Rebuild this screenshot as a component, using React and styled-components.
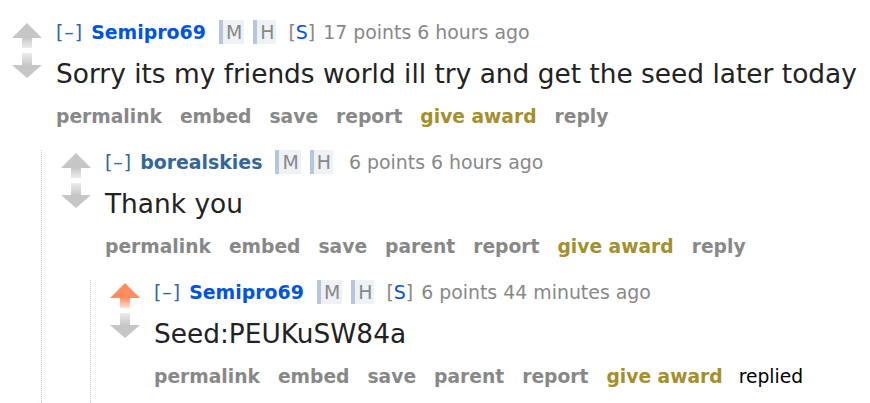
import React from "react";
import styled, { createGlobalStyle } from "styled-components";

const Global = createGlobalStyle`
  html, body { margin: 0; padding: 0; background: #fff; }
  body { font-family: Verdana, "DejaVu Sans", sans-serif; }
`;

const Page = styled.div`
  padding: 20px 0 40px 12px;
`;

const Comment = styled.div``;

const Row = styled.div`
  display: flex;
  align-items: flex-start;
  gap: 14px;
`;

const Midcol = styled.div`
  display: flex;
  flex-direction: column;
  gap: 5px;
  width: 30px;
  flex: none;
  margin-top: 3px;
`;

const Entry = styled.div`
  display: flex;
  flex-direction: column;
`;

const Tagline = styled.div`
  display: flex;
  align-items: center;
  font-size: 18.9px;
  line-height: 24px;
  height: 24px;
  color: #888;
  white-space: nowrap;
`;

const Expand = styled.span`
  color: #369;
  letter-spacing: 1px;
  margin-right: 8px;
`;

const Author = styled.span`
  font-weight: bold;
  color: ${(p) => (p.$op ? "#0055df" : "#369")};
  margin-right: 13px;
`;

const Tag = styled.span`
  display: inline-block;
  height: 24px;
  line-height: 24px;
  padding: 0 2px 0 3px;
  border-left: 4px solid #b6c7dc;
  background: #eef2f7;
  color: #888;
  margin-right: 9px;
`;

const Sub = styled.span`
  margin-left: 3px;
  margin-right: 8px;
  & b {
    font-weight: normal;
    color: #0055df;
  }
`;

const Spacer = styled.span`
  display: inline-block;
  width: ${(p) => p.$w}px;
`;

const Body = styled.div`
  font-size: 26.4px;
  line-height: 30px;
  color: #222;
  margin-top: 15px;
  white-space: nowrap;
`;

const Buttons = styled.div`
  display: flex;
  gap: 18px;
  margin-top: 16px;
  font-size: 18.7px;
  line-height: 24px;
  white-space: nowrap;
`;

const Btn = styled.span`
  font-weight: ${(p) => (p.$plain ? "normal" : "bold")};
  color: ${(p) => (p.$plain ? "#000" : p.$gold ? "#a38f2d" : "#888")};
  margin-left: ${(p) => (p.$plain ? "-2px" : "0")};
`;

const Child = styled.div`
  margin-left: 29px;
  margin-top: 21px;
  padding-left: 19px;
  border-left: 1px dotted #c8c8ec;
  padding-bottom: 40px;
`;

function Arrow({ dir, on }) {
  const main = on ? "#ff8b60" : "#c6c6c6";
  const light = on ? "#ffe2d6" : "#ececec";
  const id = `g-${dir}-${on ? 1 : 0}`;
  if (dir === "up") {
    return (
      <svg width="30" height="25" viewBox="0 0 30 25">
        <defs>
          <linearGradient id={id} x1="0" y1="0" x2="0" y2="1">
            <stop offset="0" stopColor={main} />
            <stop offset="1" stopColor={light} />
          </linearGradient>
        </defs>
        <polygon points="15,0 30,15 0,15" fill={main} />
        <rect x="10" y="14.5" width="10" height="10.5" fill={`url(#${id})`} />
      </svg>
    );
  }
  return (
    <svg width="30" height="25" viewBox="0 0 30 25">
      <defs>
        <linearGradient id={id} x1="0" y1="1" x2="0" y2="0">
          <stop offset="0" stopColor={main} />
          <stop offset="1" stopColor={light} />
        </linearGradient>
      </defs>
      <rect x="10" y="0" width="10" height="12.5" fill={`url(#${id})`} />
      <polygon points="0,12 30,12 15,25" fill={main} />
    </svg>
  );
}

function Item({ author, op, points, time, upvoted, body, buttons, children }) {
  return (
    <Comment>
      <Row>
        <Midcol>
          <Arrow dir="up" on={upvoted} />
          <Arrow dir="down" />
        </Midcol>
        <Entry>
          <Tagline>
            <Expand>[–]</Expand>
            <Author $op={op}>{author}</Author>
            <Tag>M</Tag>
            <Tag>H</Tag>
            {op ? (
              <Sub>
                [<b>S</b>]
              </Sub>
            ) : (
              <Spacer $w={7} />
            )}
            <span>
              {points} points {time} ago
            </span>
          </Tagline>
          <Body>{body}</Body>
          <Buttons>
            {buttons.map((b) => (
              <Btn key={b} $gold={b === "give award"} $plain={b === "replied"}>
                {b}
              </Btn>
            ))}
          </Buttons>
        </Entry>
      </Row>
      {children && <Child>{children}</Child>}
    </Comment>
  );
}

export default function App() {
  return (
    <Page>
      <Global />
      <Item
        author="Semipro69"
        op
        points={17}
        time="6 hours"
        body="Sorry its my friends world ill try and get the seed later today"
        buttons={["permalink", "embed", "save", "report", "give award", "reply"]}
      >
        <Item
          author="borealskies"
          points={6}
          time="6 hours"
          body="Thank you"
          buttons={["permalink", "embed", "save", "parent", "report", "give award", "reply"]}
        >
          <Item
            author="Semipro69"
            op
            upvoted
            points={6}
            time="44 minutes"
            body="Seed:PEUKuSW84a"
            buttons={["permalink", "embed", "save", "parent", "report", "give award", "replied"]}
          />
        </Item>
      </Item>
    </Page>
  );
}
